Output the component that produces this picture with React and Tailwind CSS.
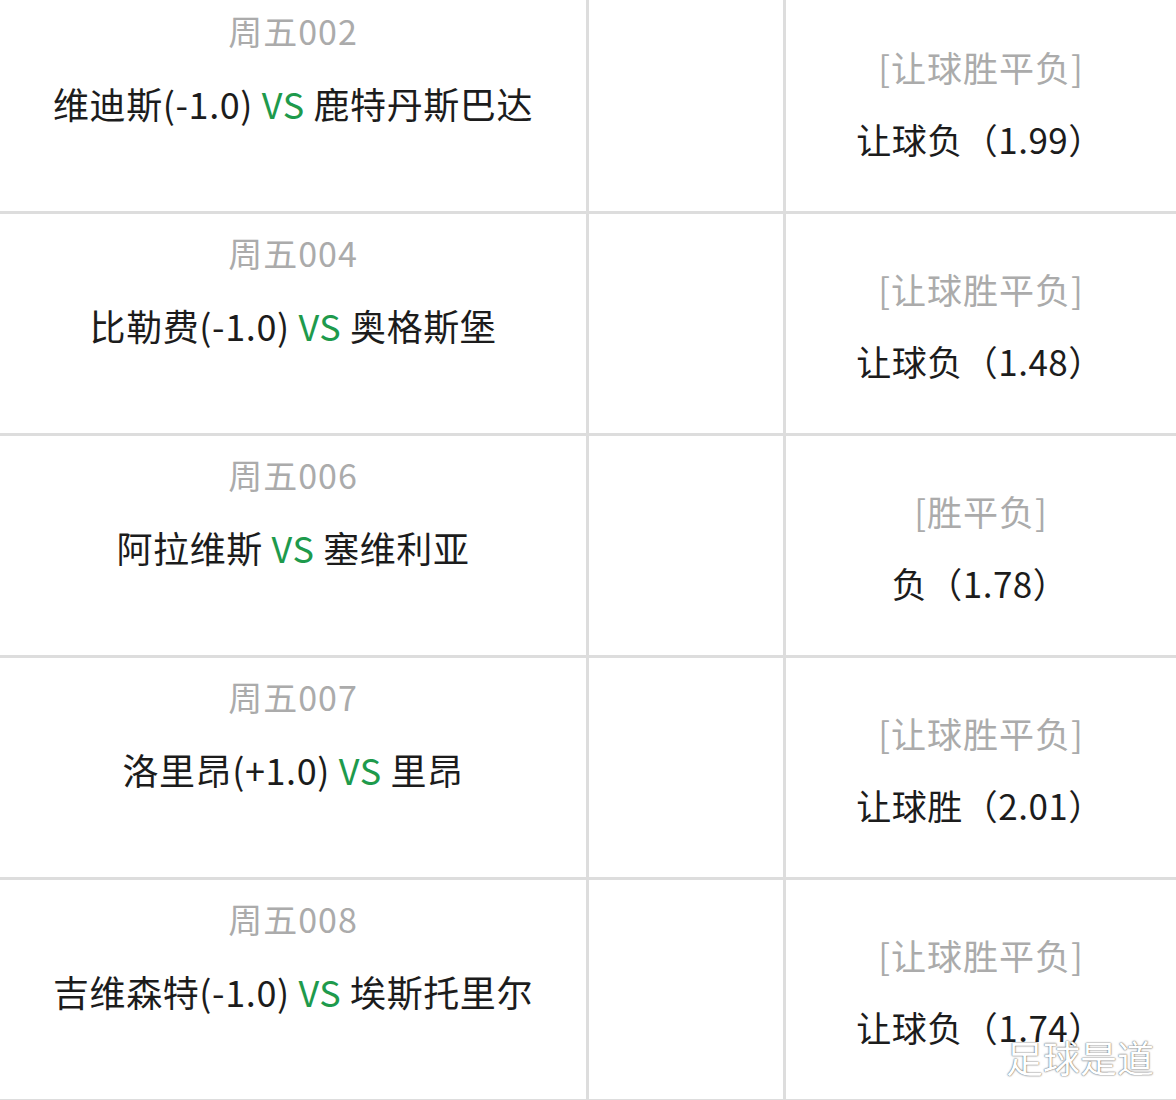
import React from 'react';

const rows = [
  { code: '周五002', home: '维迪斯(-1.0)', away: '鹿特丹斯巴达', play: '[让球胜平负]', pick: '让球负（1.99）' },
  { code: '周五004', home: '比勒费(-1.0)', away: '奥格斯堡', play: '[让球胜平负]', pick: '让球负（1.48）' },
  { code: '周五006', home: '阿拉维斯', away: '塞维利亚', play: '[胜平负]', pick: '负（1.78）' },
  { code: '周五007', home: '洛里昂(+1.0)', away: '里昂', play: '[让球胜平负]', pick: '让球胜（2.01）' },
  { code: '周五008', home: '吉维森特(-1.0)', away: '埃斯托里尔', play: '[让球胜平负]', pick: '让球负（1.74）' },
];

function Row({ r }) {
  return (
    <div className="flex h-[222px] border-b-[3px] border-[#dddddd]">
      <div className="w-[589px] shrink-0 border-r-[3px] border-[#dddddd] pt-[3px] text-center">
        <div className="text-[34px] leading-[72px] tracking-[1px] text-[#ababab]">{r.code}</div>
        <div className="text-[36px] leading-[72px] tracking-[0.6px] text-[#1c1c1c] whitespace-nowrap">
          {r.home} <span className="text-[#1e9a4c]">VS</span> {r.away}
        </div>
      </div>
      <div className="w-[197px] shrink-0 border-r-[3px] border-[#dddddd]" />
      <div className="flex-1 pt-[39px] text-center">
        <div className="text-[35px] leading-[72px] tracking-[1px] text-[#ababab]">{r.play}</div>
        <div className="text-[35px] leading-[72px] tracking-[0.5px] text-[#1c1c1c] pr-[2px] whitespace-nowrap">{r.pick}</div>
      </div>
    </div>
  );
}

export default function App() {
  return (
    <div
      className="relative h-[1100px] w-[1176px] overflow-hidden bg-white"
      style={{ fontFamily: '"Noto Sans CJK SC", "Noto Sans", sans-serif' }}
    >
      <div className="-mt-[8px]">
        {rows.map((r) => (
          <Row key={r.code} r={r} />
        ))}
      </div>
      <div className="absolute right-[22px] bottom-[24px] text-[37px] leading-none text-white [text-shadow:0_0_2px_rgba(0,0,0,0.55),0_0_1px_rgba(0,0,0,0.5)]">
        足球是道
      </div>
    </div>
  );
}
